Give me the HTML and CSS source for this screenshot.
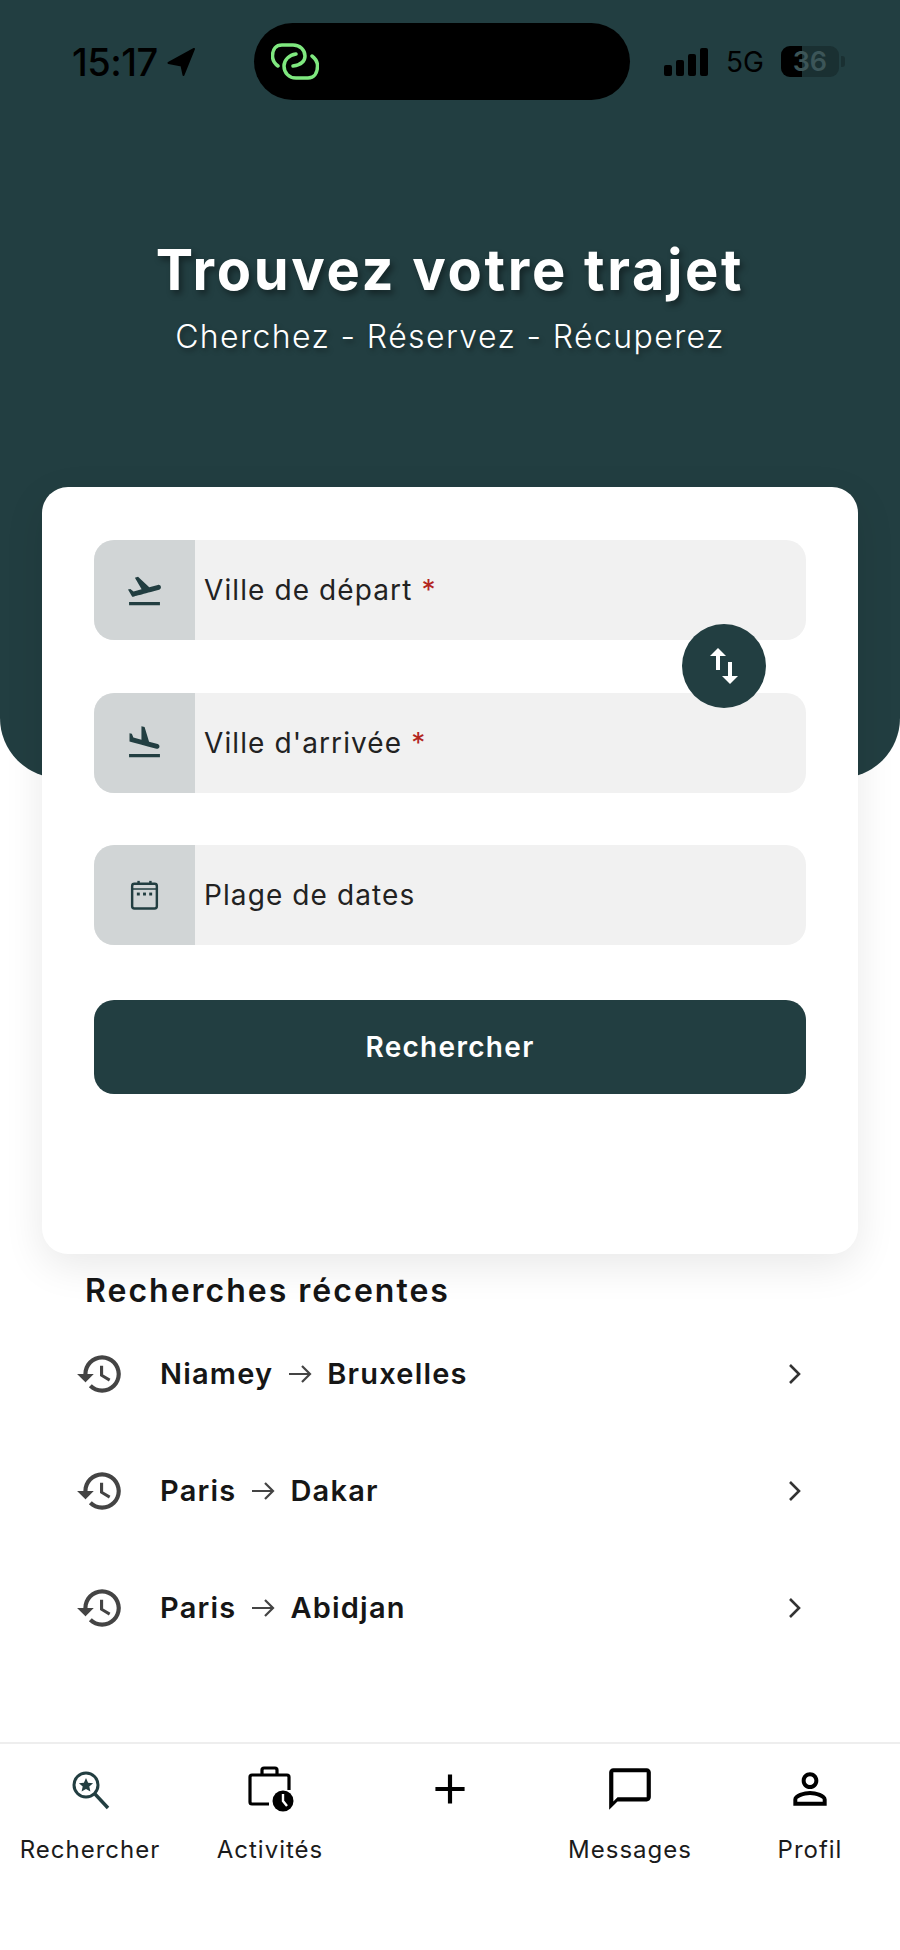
FILE: index.html
```html
<!DOCTYPE html>
<html lang="fr">
<head>
  <meta charset="UTF-8" />
  <meta name="viewport" content="width=device-width, initial-scale=1.0"/>
  <title>Trouvez votre trajet</title>
  <link rel="stylesheet" href="styles.css">
</head>
<body>
  <header class="hero">
    <div class="status-bar">
      <div class="status-left">
        <span class="time">15:17</span>
        <svg class="loc-arrow" viewBox="0 0 30 30"><path d="M28 2 L2.500 16 L15.500 18.500 L17.500 28 Z" fill="#000" stroke="#000" stroke-width="2" stroke-linejoin="round"/></svg>
      </div>
      <div class="island">
        <svg class="island-logo" viewBox="0 0 48 37" fill="none" stroke="#7fe87f" stroke-width="3.500" stroke-linecap="round">
          <path d="M7 23 C3 20 1.500 17 1.500 13 C1.500 6 5 2 11 2 H22 C29 2 34 7 34 13 C34 19 29 22 22 23"/>
          <path d="M41 13 C45 16 46.500 19 46.500 23 C46.500 30 43 35 37 35 H25 C18 35 13 30 13 23 C13 17 18 12 25 11"/>
        </svg>
      </div>
      <div class="status-right">
        <div class="signal"><i class="b1"></i><i class="b2"></i><i class="b3"></i><i class="b4"></i></div>
        <span class="net">5G</span>
        <div class="battery"><div class="battery-fill"></div><span>36</span></div>
        <div class="battery-tip"></div>
      </div>
    </div>
    <h1>Trouvez votre trajet</h1>
    <p class="subtitle">Cherchez - Réservez - Récuperez</p>
  </header>

  <main class="card">
    <div class="fields">
      <div class="field">
        <div class="field-icon">
          <svg viewBox="0 0 24 24"><path d="M2.500 19h19v2h-19zm19.570-9.360c-.21-.8-1.040-1.280-1.840-1.060L14.920 10l-6.900-6.430-1.930.51 4.140 7.170-4.970 1.330-1.970-1.540-1.450.39 2.590 4.490s7.120-1.900 16.570-4.430c.81-.23 1.280-1.050 1.070-1.850z"/></svg>
        </div>
        <span class="field-label">Ville de départ <em>*</em></span>
      </div>
      <div class="field">
        <div class="field-icon">
          <svg viewBox="0 0 24 24"><path d="M2.500 19h19v2h-19zm7.180-5.730l4.350 1.160 5.310 1.420c.8.21 1.620-.26 1.840-1.060.21-.8-.26-1.620-1.060-1.840l-5.310-1.420-2.760-9.020L10.120 2v8.280L5.150 8.950l-.93-2.320-1.450-.39v5.170l1.600.43 5.310 1.430z"/></svg>
        </div>
        <span class="field-label">Ville d'arrivée <em>*</em></span>
      </div>
      <div class="field">
        <div class="field-icon">
          <svg class="calendar" viewBox="0 0 24 24">
            <rect x="4.400" y="4.800" width="15.200" height="15.200" rx="1.400" fill="none" stroke="#223e41" stroke-width="1.500"/>
            <path d="M4.400 8 H19.600" stroke="#223e41" stroke-width="1"/>
            <rect x="7.600" y="3" width="1.500" height="2.500"/>
            <rect x="14.900" y="3" width="1.500" height="2.500"/>
            <rect x="7.300" y="10.200" width="1.800" height="1.800"/>
            <rect x="11.100" y="10.200" width="1.800" height="1.800"/>
            <rect x="14.900" y="10.200" width="1.800" height="1.800"/>
          </svg>
        </div>
        <span class="field-label">Plage de dates</span>
      </div>
      <button class="swap-btn">
        <svg viewBox="0 0 24 24"><path d="M16 17.010V10h-2v7.010h-3L15 21l4-3.990h-3zM9 3L5 6.990h3V14h2V6.990h3L9 3z"/></svg>
      </button>
    </div>
    <button class="search-btn">Rechercher</button>
  </main>

  <section class="recent">
    <h2>Recherches récentes</h2>
    <div class="recent-row">
      <svg class="history" viewBox="0 0 24 24"><path d="M13 3c-4.970 0-9 4.030-9 9H1l3.890 3.890.07.14L9 12H6c0-3.870 3.130-7 7-7s7 3.130 7 7-3.130 7-7 7c-1.930 0-3.680-.79-4.940-2.060l-1.420 1.420C8.270 19.990 10.510 21 13 21c4.970 0 9-4.030 9-9s-4.030-9-9-9zm-1 5v5l4.280 2.540.72-1.210-3.500-2.080V8H12z"/></svg>
      <span class="route">Niamey <svg class="arrow" viewBox="0 0 24 20"><path d="M1 10 H22 M14 2 L22 10 L14 18"/></svg> Bruxelles</span>
      <svg class="chevron" viewBox="0 0 24 24"><path d="M8 3 L17 12 L8 21"/></svg>
    </div>
    <div class="recent-row">
      <svg class="history" viewBox="0 0 24 24"><path d="M13 3c-4.970 0-9 4.030-9 9H1l3.890 3.890.07.14L9 12H6c0-3.870 3.130-7 7-7s7 3.130 7 7-3.130 7-7 7c-1.930 0-3.680-.79-4.940-2.060l-1.420 1.420C8.270 19.990 10.510 21 13 21c4.970 0 9-4.030 9-9s-4.030-9-9-9zm-1 5v5l4.280 2.540.72-1.210-3.500-2.080V8H12z"/></svg>
      <span class="route">Paris <svg class="arrow" viewBox="0 0 24 20"><path d="M1 10 H22 M14 2 L22 10 L14 18"/></svg> Dakar</span>
      <svg class="chevron" viewBox="0 0 24 24"><path d="M8 3 L17 12 L8 21"/></svg>
    </div>
    <div class="recent-row">
      <svg class="history" viewBox="0 0 24 24"><path d="M13 3c-4.970 0-9 4.030-9 9H1l3.890 3.890.07.14L9 12H6c0-3.870 3.130-7 7-7s7 3.130 7 7-3.130 7-7 7c-1.930 0-3.680-.79-4.940-2.060l-1.420 1.420C8.270 19.990 10.510 21 13 21c4.970 0 9-4.030 9-9s-4.030-9-9-9zm-1 5v5l4.280 2.540.72-1.210-3.500-2.080V8H12z"/></svg>
      <span class="route">Paris <svg class="arrow" viewBox="0 0 24 20"><path d="M1 10 H22 M14 2 L22 10 L14 18"/></svg> Abidjan</span>
      <svg class="chevron" viewBox="0 0 24 24"><path d="M8 3 L17 12 L8 21"/></svg>
    </div>
  </section>

  <nav class="tabbar">
    <div class="tab">
      <svg viewBox="0 0 50 50" fill="none" stroke="#223e41" stroke-width="3">
        <circle cx="21" cy="21" r="12"/>
        <path d="M30 30 L43 44" stroke-width="3.400"/>
        <path d="M21 14 l2.100 4.700 5 .5 -3.800 3.400 1.100 5 -4.400 -2.600 -4.400 2.600 1.100 -5 -3.800 -3.400 5 -.5 z" fill="#223e41" stroke="none"/>
      </svg>
      <span>Rechercher</span>
    </div>
    <div class="tab">
      <svg viewBox="0 0 50 50" fill="none" stroke="#000" stroke-width="3.200">
        <path d="M24 40 H7 a2 2 0 0 1 -2 -2 V13 a2 2 0 0 1 2 -2 H42 a2 2 0 0 1 2 2 V26"/>
        <path d="M17 11 V6 a2 2 0 0 1 2 -2 H30 a2 2 0 0 1 2 2 V11"/>
        <circle cx="38" cy="37" r="10.500" fill="#000" stroke="none"/>
        <path d="M38 30 V37 L42 42" stroke="#fff" stroke-width="2.400"/>
      </svg>
      <span>Activités</span>
    </div>
    <div class="tab">
      <svg viewBox="0 0 24 24"><path d="M19 13h-6v6h-2v-6H5v-2h6V5h2v6h6v2z"/></svg>
    </div>
    <div class="tab">
      <svg viewBox="0 0 24 24"><path d="M20 2H4c-1.100 0-2 .9-2 2v18l4-4h14c1.100 0 2-.9 2-2V4c0-1.100-.9-2-2-2zm0 14H6l-2 2V4h16v12z"/></svg>
      <span>Messages</span>
    </div>
    <div class="tab">
      <svg viewBox="0 0 24 24"><path d="M12 5.900c1.160 0 2.100.94 2.100 2.100s-.94 2.100-2.100 2.100S9.900 9.160 9.900 8s.94-2.100 2.100-2.100m0 9c2.970 0 6.100 1.460 6.100 2.100v1.100H5.900V17c0-.64 3.130-2.100 6.100-2.100M12 4C9.790 4 8 5.790 8 8s1.790 4 4 4 4-1.790 4-4-1.790-4-4-4zm0 9c-2.670 0-8 1.340-8 4v3h16v-3c0-2.660-5.330-4-8-4z"/></svg>
      <span>Profil</span>
    </div>
  </nav>
</body>
</html>
```

FILE: styles.css
```css
body {
  font-family: Inter, "Liberation Sans", sans-serif;
  background-color: #fff;
  color: #161616;
  margin: 0;
  height: 1950px;
  display: flex;
  flex-direction: column;
  overflow: hidden;
}

.hero {
  height: 778px;
  flex-shrink: 0;
  background-color: #223e41;
  border-radius: 0 0 60px 60px;
  color: #fff;
  text-align: center;
  box-sizing: border-box;
  padding-top: 23px;
}

.status-bar {
  display: flex;
  align-items: center;
  height: 77px;
  padding-left: 72px;
}

.status-left {
  display: flex;
  align-items: center;
  width: 182px;
  gap: 8px;
}

.time {
  font-size: 38px;
  font-weight: 500;
  color: #000;
  letter-spacing: -0.5px;
}

.loc-arrow {
  width: 30px;
  height: 30px;
}

.island {
  width: 376px;
  height: 77px;
  background: #000;
  border-radius: 39px;
  display: flex;
  align-items: center;
  padding-left: 17px;
  box-sizing: border-box;
}

.island-logo {
  width: 48px;
  height: 37px;
}

.status-right {
  display: flex;
  align-items: center;
  margin-left: 34px;
}

.signal {
  display: flex;
  align-items: flex-end;
  gap: 4px;
  height: 28px;
}

.signal i {
  display: block;
  width: 8px;
  background: #000;
  border-radius: 2px;
}

.b1 { height: 11px; }
.b2 { height: 16px; }
.b3 { height: 22px; }
.b4 { height: 28px; }

.net {
  font-size: 28px;
  font-weight: 400;
  color: #000;
  margin-left: 18px;
}

.battery {
  position: relative;
  width: 58px;
  height: 31px;
  margin-left: 17px;
  background: #1a3032;
  border-radius: 9px;
  overflow: hidden;
}

.battery-fill {
  width: 21px;
  height: 100%;
  background: #000;
}

.battery span {
  position: absolute;
  top: 0;
  left: 0;
  width: 100%;
  text-align: center;
  font-size: 27px;
  line-height: 31px;
  font-weight: 600;
  color: #3c5558;
}

.battery-tip {
  width: 4px;
  height: 11px;
  margin-left: 2px;
  background: #1a3032;
  border-radius: 0 3px 3px 0;
}

h1 {
  font-size: 56px;
  font-weight: 700;
  line-height: 68px;
  letter-spacing: 2.7px;
  margin: 136px 0 0;
  text-shadow: 3px 4px 6px rgba(0,0,0,0.4);
}

.subtitle {
  font-size: 32px;
  font-weight: 300;
  line-height: 40px;
  letter-spacing: 1.4px;
  margin: 13px 0 0;
  text-shadow: 2px 3px 5px rgba(0,0,0,0.35);
}

.card {
  position: relative;
  flex-shrink: 0;
  box-sizing: border-box;
  width: 816px;
  height: 767px;
  margin: -291px 0 0 42px;
  padding: 53px 52px 0;
  background: #fff;
  border-radius: 26px;
  box-shadow: 0 12px 40px rgba(0,0,0,0.09);
}

.fields {
  position: relative;
  display: flex;
  flex-direction: column;
  gap: 52.5px;
}

.field {
  display: flex;
  align-items: center;
  height: 100px;
  background: #f1f1f1;
  border-radius: 20px;
  overflow: hidden;
}

.field-icon {
  width: 101px;
  height: 100%;
  background: #d1d5d6;
  display: flex;
  align-items: center;
  justify-content: center;
  flex-shrink: 0;
}

.field-icon svg {
  width: 39px;
  height: 39px;
  fill: #223e41;
}

.field-label {
  margin-left: 9px;
  font-size: 28px;
  letter-spacing: 1.1px;
  color: #222;
}

.field-label em {
  font-style: normal;
  color: #b3261e;
}

.swap-btn {
  position: absolute;
  left: 588px;
  top: 84px;
  width: 84px;
  height: 84px;
  padding: 0;
  border: none;
  border-radius: 50%;
  background: #223e41;
  display: flex;
  align-items: center;
  justify-content: center;
}

.swap-btn svg {
  width: 48px;
  height: 48px;
  fill: #fff;
}

.search-btn {
  display: block;
  width: 100%;
  height: 94px;
  margin-top: 55px;
  border: none;
  border-radius: 20px;
  background: #223e41;
  color: #fff;
  font-family: inherit;
  font-size: 28px;
  font-weight: 600;
  letter-spacing: 1.3px;
}

.recent {
  padding: 18px 0 0 78px;
}

.recent h2 {
  font-size: 32px;
  font-weight: 600;
  line-height: 38px;
  letter-spacing: 2px;
  margin: 0 0 0 7px;
}

.recent-row {
  display: flex;
  align-items: center;
  height: 117px;
  padding-right: 94px;
}

.recent h2 + .recent-row {
  margin-top: 5px;
}

.history {
  width: 50px;
  height: 50px;
  margin-left: -3px;
  fill: #444;
  flex-shrink: 0;
}

.route {
  display: flex;
  align-items: center;
  gap: 15px;
  margin-left: 35px;
  font-size: 29px;
  font-weight: 600;
  letter-spacing: 1.2px;
  flex: 1;
}

.arrow {
  width: 24px;
  height: 20px;
  fill: none;
  stroke: #444;
  stroke-width: 2.2;
}

.chevron {
  width: 24px;
  height: 24px;
  fill: none;
  stroke: #333;
  stroke-width: 2.6;
}

.tabbar {
  margin-top: auto;
  height: 208px;
  box-sizing: border-box;
  border-top: 2px solid #eeeeee;
  display: grid;
  grid-template-columns: repeat(5, 180px);
}

.tab {
  display: flex;
  flex-direction: column;
  align-items: center;
  padding-top: 20px;
  gap: 21px;
}

.tab svg {
  width: 50px;
  height: 50px;
}

.tab span {
  font-size: 24px;
  line-height: 30px;
  letter-spacing: 1px;
  color: #1b1b1b;
}
```
